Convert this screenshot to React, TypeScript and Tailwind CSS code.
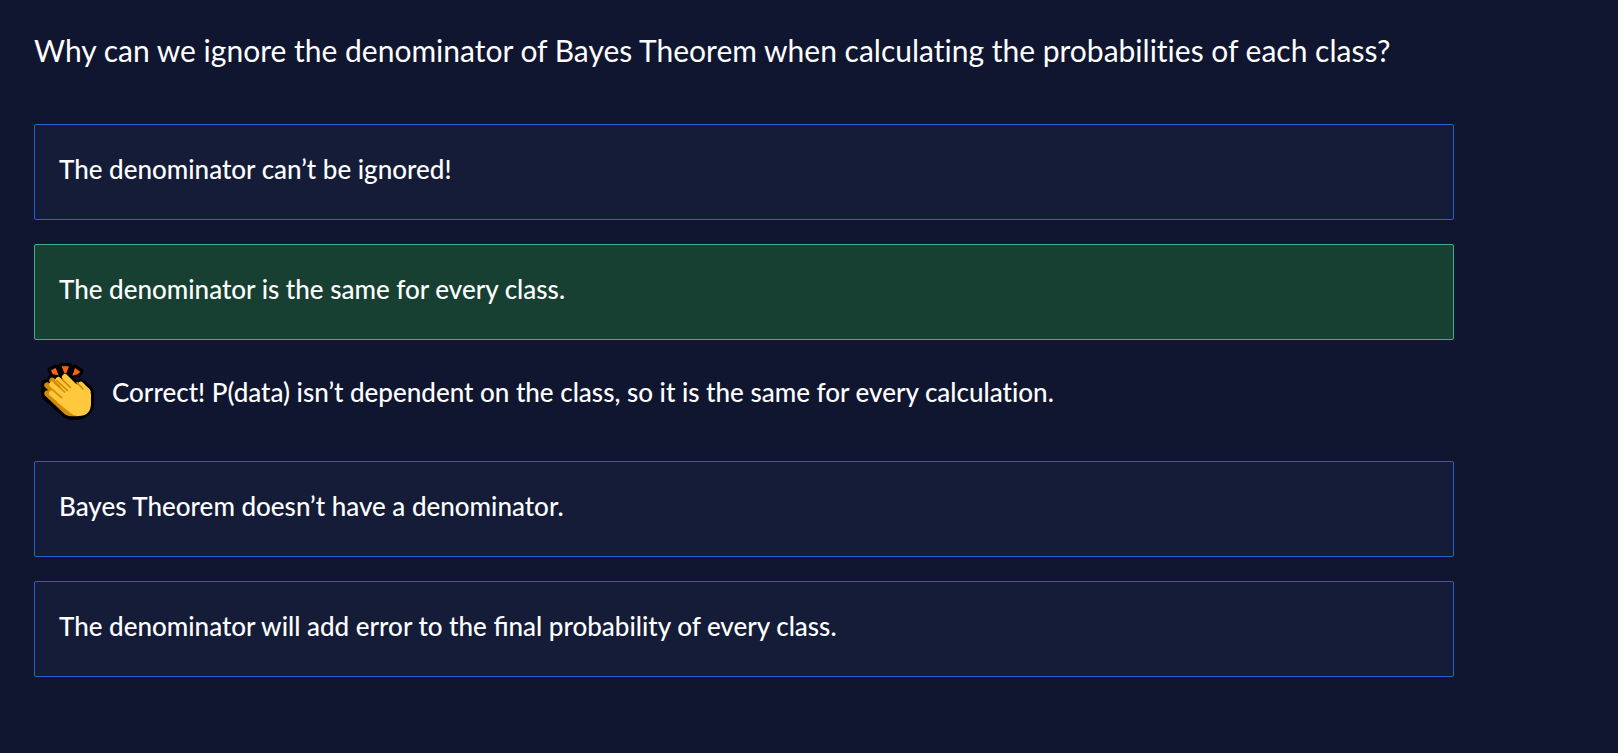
import { useState } from "react";

type Option = { text: string; feedback?: string };

const options: Option[] = [
  { text: "The denominator can’t be ignored!" },
  {
    text: "The denominator is the same for every class.",
    feedback:
      "Correct! P(data) isn’t dependent on the class, so it is the same for every calculation.",
  },
  { text: "Bayes Theorem doesn’t have a denominator." },
  { text: "The denominator will add error to the final probability of every class." },
];

function ClappingHands() {
  return (
    <svg viewBox="30 36 168 177" className="h-[59px] w-14 shrink-0" aria-hidden="true">
      <g stroke="#000" strokeWidth="20" strokeLinejoin="round" strokeLinecap="round" fill="#000">
        <path d="M63 61 77 54 86 76 68 73ZM95 49H117L109 70H103ZM135 54 151 65 143 73 127 77Z" />
        <path d="M59 90 66 84 81 84 96 76 106 73 136 102 147 96 165 104 178 118 182 128V160Q180 182 164 192 156 198 145 199H119Q108 196 100 188L46 140 42 124 48 116 42 108 45 99 57 98Z" />
      </g>
      <path
        d="M63 61 77 54 86 76 68 73ZM95 49H117L109 70H103ZM135 54 151 65 143 73 127 77Z"
        fill="#ff620d"
      />
      <g fill="none" stroke="#d38b08" strokeWidth="18" strokeLinecap="round">
        <path d="M67 92 100 124M52 106 100 150M52 130 104 177" />
      </g>
      <path d="M60 112 46 137 98 187Q107 198 124 199L145 199 130 150Z" fill="#d38b08" />
      <g fill="none" stroke="#ffc83d" strokeWidth="18" strokeLinecap="round">
        <path d="M105 81 150 126M85 90 130 135M67 104 115 150M66 130 115 172M152 104 172 124" />
      </g>
      <path
        d="M100 88 112 92 140 103 175 114Q183 121 183 134V160Q183 198 145 198 132 199 123 190L82 157 85 130Z"
        fill="#ffc83d"
      />
      <path
        d="M72 97 104 126M96 88 121 112M80 92 112 121M66 118 95 143M141 98 159 117"
        fill="none"
        stroke="#d38b08"
        strokeWidth="5"
        strokeLinecap="round"
      />
    </svg>
  );
}

export default function App() {
  const [selected, setSelected] = useState(1);

  return (
    <main className="min-h-screen bg-[#10162f] px-[34px] pt-[29px] pb-10 font-['Lato','Noto_Sans',sans-serif] text-white">
      <h1 className="mb-[53px] text-[30px] leading-[42px] [font-variant-ligatures:no-common-ligatures]">
        Why can we ignore the denominator of Bayes Theorem when calculating the probabilities of
        each class?
      </h1>
      <ul className="flex max-w-[1420px] flex-col gap-6 text-[26px] leading-10 font-medium">
        {options.map((option, index) => {
          const correct = selected === index && option.feedback;
          return (
            <li key={option.text}>
              <button
                type="button"
                aria-pressed={selected === index}
                onClick={() => setSelected(index)}
                className={
                  "block w-full rounded-[2px] border px-6 pt-6 pb-[30px] text-left " +
                  (correct ? "border-[#3bb28b] bg-[#174032]" : "border-[#2a5fcf] bg-[#151c38]")
                }
              >
                {option.text}
              </button>
              {correct && (
                <div role="status" className="flex items-center gap-4 px-1.5 pt-[22px] pb-4">
                  <ClappingHands />
                  <p className="[font-variant-ligatures:no-common-ligatures]">{option.feedback}</p>
                </div>
              )}
            </li>
          );
        })}
      </ul>
    </main>
  );
}
